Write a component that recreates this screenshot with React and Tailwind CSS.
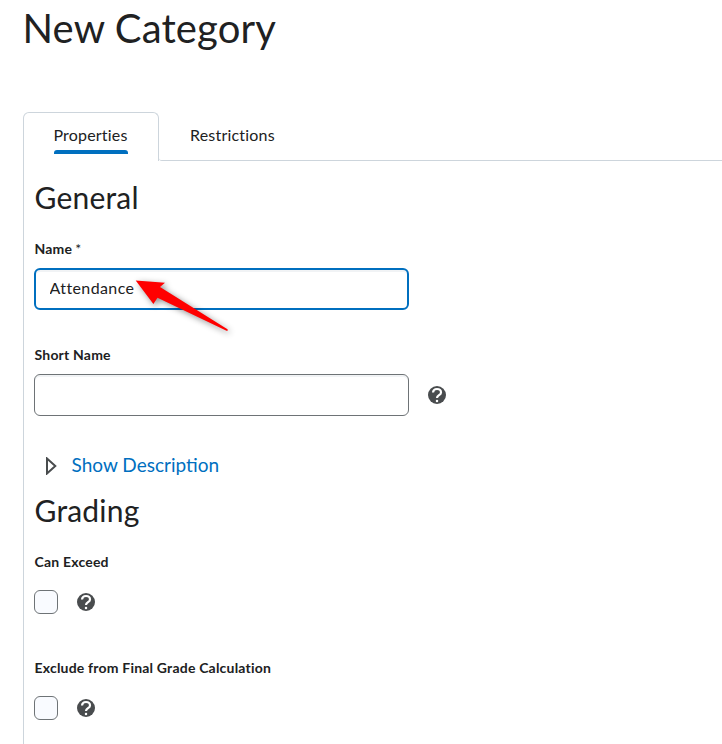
import React, { useState } from 'react';

const HelpIcon = () => (
  <svg width="18" height="18" viewBox="0 0 18 18" className="shrink-0">
    <circle cx="9" cy="9" r="9" fill="#494c4e" />
    <path d="M5 6.5C5.2 4.2 6.8 3 9 3C11.3 3 13 4.3 13 6.4C13 9.2 9 9.2 9 12.1" fill="none" stroke="#fff" strokeWidth="2.2" />
    <circle cx="9" cy="14.9" r="1.25" fill="#fff" />
  </svg>
);

const Label = ({ children, required }) => (
  <label className="block h-5 pl-[0.5px] text-[14px] leading-5 font-bold tracking-[0.2px]">
    {children}
    {required && <span className="ml-[3px] font-normal">*</span>}
  </label>
);

const CheckboxField = ({ label }) => (
  <div>
    <Label>{label}</Label>
    <div className="mt-[18px] flex items-center gap-[19px]">
      <input type="checkbox" className="size-6 appearance-none rounded-[6px] border border-[#6e7376] bg-[#f9fbff]" />
      <HelpIcon />
    </div>
  </div>
);

const App = () => {
  const [name, setName] = useState('Attendance');
  const [shortName, setShortName] = useState('');

  return (
    <div className="h-[744px] overflow-hidden bg-white pl-[23px] font-['Lato',sans-serif] text-[#202122]">
      <h1 className="-ml-[0.5px] h-28 pt-1 text-[40px] leading-[48px] tracking-[0.15px]">New Category</h1>

      <div className="flex h-[49px] text-[16px] leading-6 tracking-[0.2px]">
        <button className="flex w-[136px] items-start justify-center rounded-t-[6px] border border-b-0 border-[#cdd5dc] pt-[10px]">
          <span className="relative block h-[31px] w-[74px] whitespace-nowrap">
            <span className="-ml-[1px]">Properties</span>
            <span className="absolute inset-x-0 bottom-0 h-1 rounded-t-[3px] bg-[#006fbf]" />
          </span>
        </button>
        <button className="flex-1 rounded-bl-[3px] border-b border-[#cdd5dc] pb-[2px] pl-[31px] text-left">Restrictions</button>
      </div>

      <div className="h-[583px] border-l border-[#cdd5dc] pt-[18px] pl-[10px]">
        <h2 className="pl-[0.5px] text-[30px] leading-9 tracking-[0.2px]">General</h2>

        <div className="relative mt-6">
          <Label required>Name</Label>
          <input
            value={name}
            onChange={(e) => setName(e.target.value)}
            className="mt-[9px] block h-[42px] w-[375px] rounded-[6px] border-2 border-[#006fbf] px-[13.5px] pb-[3px] text-[16px] tracking-[0.4px] shadow-[inset_0_2px_0_0_#f1f3f5] outline-none"
          />
          {/* pointer to the name field */}
          <svg width="110" height="70" viewBox="130 270 110 70" className="pointer-events-none absolute top-[31px] left-[96px] overflow-visible drop-shadow-[2px_2px_3px_rgba(0,0,0,0.45)]">
            <path d="M135.7 280.4L165 282.7L160 287L227.5 329.3Q228.3 331 226.5 330.8L157.5 297.8L153.4 304Z" fill="#f00" />
          </svg>
        </div>

        <div className="mt-[35px]">
          <Label>Short Name</Label>
          <div className="mt-[9px] flex items-center gap-[19px]">
            <input
              value={shortName}
              onChange={(e) => setShortName(e.target.value)}
              className="h-[42px] w-[375px] rounded-[6px] border border-[#6e7376] px-[15px] text-[16px] shadow-[inset_0_2px_0_0_#f1f3f5] outline-none"
            />
            <HelpIcon />
          </div>
        </div>

        <button className="mt-[35px] flex h-7 items-center pl-[11px] text-[19px] leading-7 text-[#006fbf]">
          <svg width="12" height="18" viewBox="0 0 12 18" className="mt-[2px] mr-[14.6px]">
            <path d="M2 1.5L10.3 9L2 16.5Z" fill="none" stroke="#494c4e" strokeWidth="2" />
          </svg>
          Show Description
        </button>

        <h2 className="mt-[13px] mb-6 pl-[0.5px] text-[30px] leading-9 tracking-[0.2px]">Grading</h2>
        <div className="space-y-11">
          <CheckboxField label="Can Exceed" />
          <CheckboxField label="Exclude from Final Grade Calculation" />
        </div>
      </div>
    </div>
  );
};

export default App;
